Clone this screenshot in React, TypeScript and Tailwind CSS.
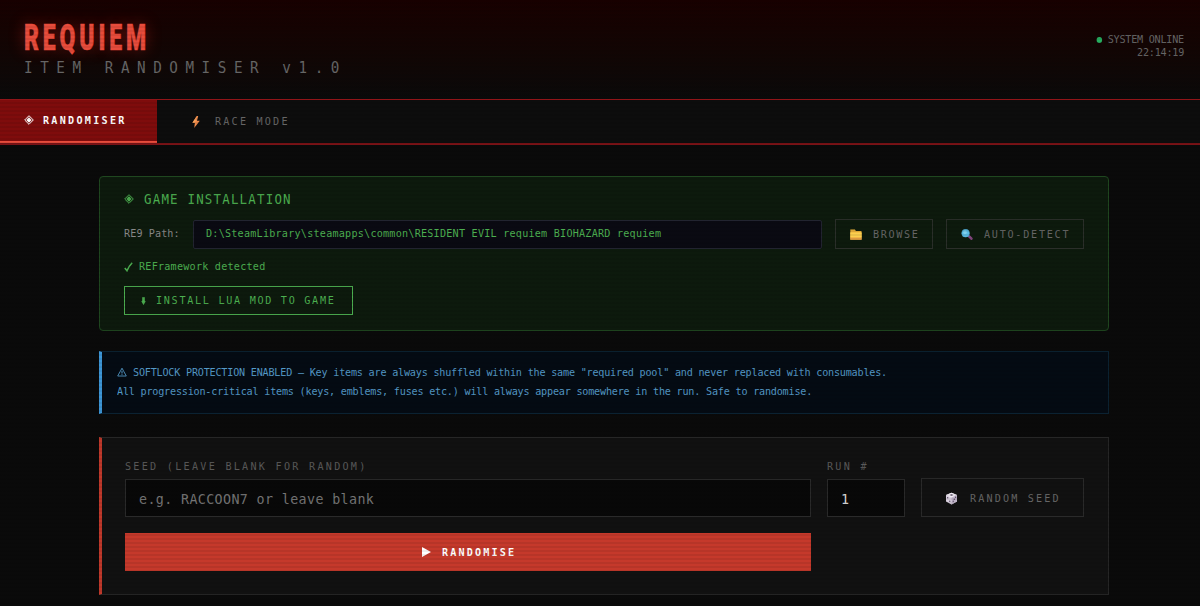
import React, { useState } from 'react';
import clsx from 'clsx';

interface TextProps {
  className?: string;
  children: React.ReactNode;
}

// Condensed terminal-style text
function Mono({ className, children }: TextProps) {
  return (
    <span className={clsx('inline-block shrink-0 origin-left scale-x-[0.92] whitespace-pre', className)}>
      {children}
    </span>
  );
}

function DiamondIcon({ className }: { className?: string }) {
  return (
    <svg viewBox="0 0 10 10" className={clsx('size-[10px] shrink-0', className)}>
      <path d="M5 .7 9.3 5 5 9.3.7 5Z" fill="none" stroke="currentColor" strokeWidth="1" />
      <path d="M5 2.3 7.7 5 5 7.7 2.3 5Z" fill="currentColor" />
    </svg>
  );
}

function BoltIcon() {
  return (
    <svg viewBox="0 0 8 12" className="h-3 w-2 shrink-0">
      <path d="M4.8 0 .4 6.8h2.5L2.2 12l5.6-7.2H5L6.2 0Z" fill="#f08a4b" />
      <path d="M4.8 0 .4 6.8h2.5L4 4Z" fill="#f7a35c" />
    </svg>
  );
}

function FolderIcon() {
  return (
    <svg viewBox="0 0 12 11" className="mt-px h-[11px] w-3 shrink-0">
      <path d="M.3.6h4.6l1 1.3h5.6v8.8H.3Z" fill="#eab03a" />
      <path d="M.3 3.4h11.4v5.2H.3Z" fill="#fccf4f" />
      <path d="M.3 8.6h11.4v2.1H.3Z" fill="#eba345" />
    </svg>
  );
}

function SearchIcon() {
  return (
    <svg viewBox="0 0 12 11" className="mt-px h-[11px] w-3 shrink-0">
      <path d="m7.6 6.9 2.8 2.8" stroke="#84467f" strokeWidth="2.6" strokeLinecap="round" />
      <circle cx="4.6" cy="4.2" r="3.9" fill="#5cbce6" stroke="#4aa3cc" strokeWidth="0.5" />
      <circle cx="4" cy="3.4" r="1.8" fill="#7fd0ee" />
    </svg>
  );
}

function DiceIcon() {
  return (
    <svg viewBox="0 0 13 13" className="mt-px size-[13px] shrink-0">
      <path d="M6.5.7 12 3v6.6l-5.5 2.8L1 9.6V3Z" fill="#d8cfde" />
      <path d="M6.5.7 12 3 6.5 5.6 1 3Z" fill="#f3eef6" />
      <path d="M6.5 5.6 12 3v6.6l-5.5 2.8Z" fill="#bfb3c8" />
      <g fill="#54465f">
        <ellipse cx="6.5" cy="3" rx="1.3" ry="0.7" />
        <circle cx="2.7" cy="5.7" r="0.7" />
        <circle cx="4.8" cy="9.3" r="0.7" />
        <circle cx="8.2" cy="9.2" r="0.7" />
        <circle cx="9.3" cy="7.2" r="0.7" />
        <circle cx="10.6" cy="5.2" r="0.7" />
      </g>
    </svg>
  );
}

function WarningIcon() {
  return (
    <svg viewBox="0 0 10 10" className="mr-[6px] mb-[2px] size-[10px] shrink-0" fill="none" stroke="currentColor">
      <path d="M5 1.2 9.3 9H.7Z" strokeWidth="0.9" strokeLinejoin="round" />
      <path d="M5 3.8v2.7M5 7.2v1" strokeWidth="1" />
    </svg>
  );
}

function Header() {
  return (
    <header className="flex h-[100px] items-start justify-between border-b border-[#9c161a] bg-linear-to-b from-[#180000] to-[#0a0a0a] pr-4 pl-6">
      <div className="flex flex-col items-start">
        <h1 className="mt-[15px] h-[45px] origin-left scale-x-[0.62] font-[Roboto] text-[37px] leading-[46px] font-black tracking-[6.3px] whitespace-nowrap text-[#e74c3c] [-webkit-text-stroke:0.5px_#e74c3c] [text-shadow:0_0_20px_rgba(231,40,30,0.45)]">
          REQUIEM
        </h1>
        <Mono className="text-[15.5px] leading-[17px] tracking-[8.22px] text-[#666]">ITEM RANDOMISER v1.0</Mono>
      </div>
      <div className="mt-[34px] flex flex-col items-end text-[11px] leading-[12.5px] tracking-[-0.24px] text-[#666]">
        <div className="flex origin-right scale-x-[0.92] items-center whitespace-pre">
          <span className="mr-[6px] h-1.5 w-[6px] rounded-full bg-[#27ae60]" />
          SYSTEM ONLINE
        </div>
        <div className="origin-right scale-x-[0.92]">22:14:19</div>
      </div>
    </header>
  );
}

function Tabs() {
  return (
    <nav className="flex h-[45px] border-b-2 border-[#7a1216] bg-[#0d0d0d]">
      <button className="flex h-[43px] w-[157px] items-center border-b-2 border-[#e74c3c] bg-[#7f0c0c] pb-[1px] pl-6 text-white">
        <DiamondIcon className="mr-[9px]" />
        <Mono className="pt-[2px] text-[11px] font-bold tracking-[2.48px]">RANDOMISER</Mono>
      </button>
      <button className="flex items-center pl-[35px] text-[#666]">
        <BoltIcon />
        <Mono className="ml-[15px] pt-[2px] text-[11px] tracking-[2.4px]">RACE MODE</Mono>
      </button>
    </nav>
  );
}

function Installation() {
  return (
    <section className="h-[155px] rounded border border-[#1f471f] bg-[#0d1a0d] px-6 pt-[14px] text-[#4caf50]">
      <div className="flex h-4 items-center">
        <DiamondIcon className="mr-[10px]" />
        <Mono className="text-[13.5px] tracking-[1.32px]">GAME INSTALLATION</Mono>
      </div>
      <div className="mt-3 flex items-center">
        <Mono className="w-[69px] pt-px text-[11px] tracking-[0.11px] text-[#888]">RE9 Path:</Mono>
        <div className="flex h-[29px] flex-1 items-center rounded-xs border border-[#222430] bg-[#0a0a12] pl-3">
          <Mono className="pt-px text-[11px] tracking-[0.25px]">
            D:\SteamLibrary\steamapps\common\RESIDENT EVIL requiem BIOHAZARD requiem
          </Mono>
        </div>
        <button className="ml-[13px] flex h-[30px] w-[98px] items-center overflow-hidden border border-[#2b2f2a] pl-[14px] text-[#666]">
          <FolderIcon />
          <Mono className="ml-[11px] pt-[3px] text-[11px] tracking-[1.81px]">BROWSE</Mono>
        </button>
        <button className="ml-[13px] flex h-[30px] w-[138px] items-center overflow-hidden border border-[#2b2f2a] pl-[14px] text-[#666]">
          <SearchIcon />
          <Mono className="ml-[11px] pt-[3px] text-[11px] tracking-[1.9px]">AUTO-DETECT</Mono>
        </button>
      </div>
      <div className="mt-[10px] flex h-4 items-center">
        <svg viewBox="0 0 9 10" className="mr-[6px] h-[10px] w-[9px] shrink-0">
          <path d="M.8 6 3 8.8Q5 4 8.2.8" fill="none" stroke="currentColor" strokeWidth="1.5" />
        </svg>
        <Mono className="pt-px text-[11px] tracking-[0.25px]">REFramework detected</Mono>
      </div>
      <button className="mt-[11px] flex h-[29px] w-[229px] items-center border border-[#4caf50] pl-4">
        <svg viewBox="0 0 5 8" className="mr-[10px] h-2 w-[5px] shrink-0">
          <path d="M1.2.3h2.6v4h1L2.5 8 .2 4.3h1Z" fill="currentColor" />
        </svg>
        <Mono className="pt-[2px] text-[11px] tracking-[1.86px]">INSTALL LUA MOD TO GAME</Mono>
      </button>
    </section>
  );
}

function Notice() {
  return (
    <section className="mt-5 h-[63px] border border-l-[3px] border-[#0b2232] border-l-[#3d96d6] bg-[#040b13] pt-[11px] pl-[15px] text-[11px] leading-[19px] tracking-[-0.22px] text-[#5499c7]">
      <div className="flex items-center">
        <WarningIcon />
        <Mono>
          SOFTLOCK PROTECTION ENABLED — Key items are always shuffled within the same "required pool" and never replaced with consumables.
        </Mono>
      </div>
      <div className="flex">
        <Mono>
          All progression-critical items (keys, emblems, fuses etc.) will always appear somewhere in the run. Safe to randomise.
        </Mono>
      </div>
    </section>
  );
}

function SeedForm() {
  const [seed, setSeed] = useState('');
  const [run, setRun] = useState('1');

  return (
    <section className="mt-[23px] h-[158px] border border-l-[3px] border-[#262626] border-l-[#c0392b] bg-[#111] pt-[21px] pr-6 pl-[23px]">
      <div className="flex items-end gap-4">
        <div className="min-w-0 flex-1">
          <div className="flex h-4 items-center pt-px text-[11px] tracking-[2.47px] text-[#5a5a5a]">
            <Mono>SEED (LEAVE BLANK FOR RANDOM)</Mono>
          </div>
          <div className="mt-1 h-[38px] overflow-hidden border border-[#2a2a2a] bg-[#080808] pl-[13px]">
            <input
              value={seed}
              onChange={(e) => setSeed(e.target.value)}
              placeholder="e.g. RACCOON7 or leave blank"
              className="h-[37px] w-full origin-left scale-x-[0.92] bg-transparent text-[14.5px] tracking-[0.4px] text-[#ddd] outline-none placeholder:text-[#757575]"
            />
          </div>
        </div>
        <div className="w-[78px]">
          <div className="flex h-4 items-center pt-px text-[11px] tracking-[2.47px] text-[#5a5a5a]">
            <Mono>RUN #</Mono>
          </div>
          <div className="mt-1 h-[38px] overflow-hidden border border-[#2a2a2a] bg-[#080808] pl-[13px]">
            <input
              value={run}
              onChange={(e) => setRun(e.target.value)}
              className="h-[37px] w-full origin-left scale-x-[0.92] bg-transparent text-[14.5px] text-[#ddd] outline-none"
            />
          </div>
        </div>
        <button className="flex h-[39px] w-[163px] items-center overflow-hidden border border-[#2a2a2a] pl-[23px] text-[#666]">
          <DiceIcon />
          <Mono className="ml-[12px] pt-[3px] text-[11px] tracking-[2.35px]">RANDOM SEED</Mono>
        </button>
      </div>
      <button className="mt-4 flex h-[38px] w-[686px] items-center bg-[#c5392b] pl-[297px] text-white">
        <svg viewBox="0 0 9 10" className="mr-[11px] h-[10px] w-[9px] shrink-0">
          <path d="M0 0 9 5 0 10Z" fill="currentColor" />
        </svg>
        <Mono className="pt-[3px] text-[11px] font-bold tracking-[2.33px]">RANDOMISE</Mono>
      </button>
    </section>
  );
}

export default function App() {
  return (
    <div className="relative h-[606px] overflow-hidden bg-[#0a0a0a] font-['DejaVu_Sans_Mono',monospace]">
      <Header />
      <Tabs />
      <main className="ml-[99px] w-[1009.5px] pt-[31px]">
        <Installation />
        <Notice />
        <SeedForm />
      </main>
      {/* CRT scanlines */}
      <div className="pointer-events-none absolute inset-0 bg-[repeating-linear-gradient(0deg,transparent_0px,transparent_2px,rgba(0,0,0,0.07)_2px,rgba(0,0,0,0.07)_4px)]" />
    </div>
  );
}
